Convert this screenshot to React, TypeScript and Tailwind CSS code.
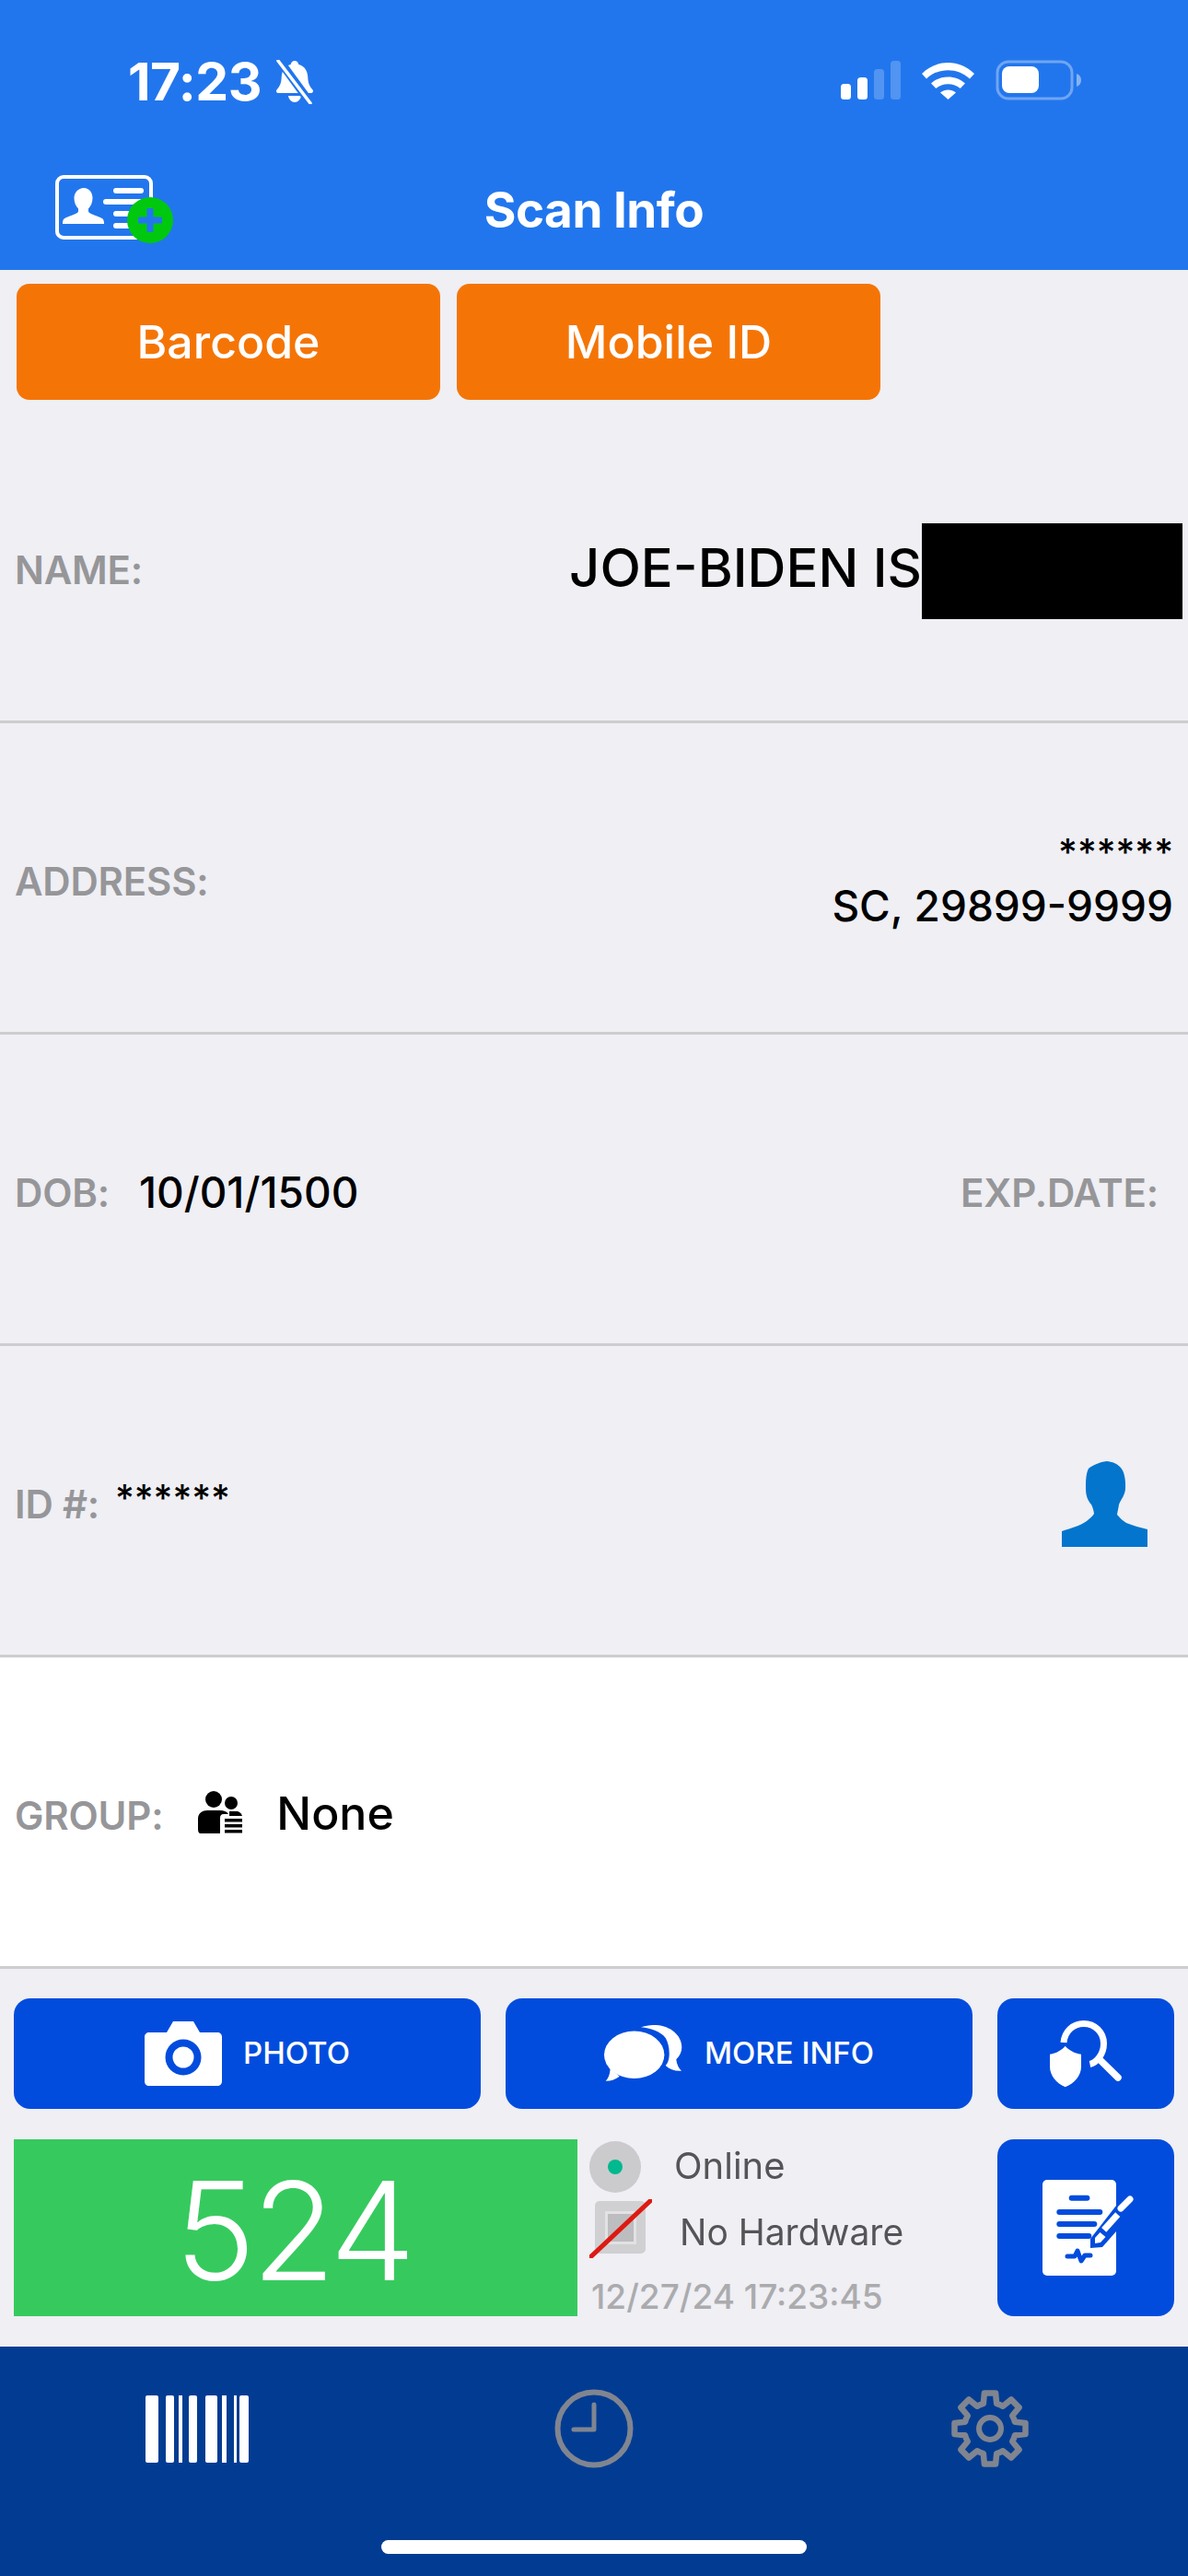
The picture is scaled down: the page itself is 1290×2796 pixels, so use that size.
const font = "font-['Inter','Liberation_Sans',sans-serif]";

function BellSlash() {
  return (
    <svg width="46" height="48" viewBox="0 0 46 48" className="ml-[13px] shrink-0">
      <path d="M23 1c2.500 0 4 1.800 4.300 4 6.500 1.600 9.700 7 10 14 .2 5 1.200 9 5.200 13.500 1.200 1.600.2 3.500-2 3.500H5.500c-2.200 0-3.200-1.900-2-3.500C7.500 28 8.500 24 8.700 19c.3-7 3.500-12.400 10-14C19 2.800 20.500 1 23 1z" fill="#fff" />
      <path d="M16 39h14c-.7 4-3.500 7-7 7s-6.300-3-7-7z" fill="#fff" />
      <path d="M6 0l35 48" stroke="#2276ed" strokeWidth="9" />
      <path d="M5 1l35 46" stroke="#fff" strokeWidth="3.500" strokeLinecap="round" />
    </svg>
  );
}

function StatusIcons() {
  return (
    <svg width="262" height="44" viewBox="0 0 262 44">
      <rect x="0" y="26" width="11" height="17" rx="3.500" fill="#fff" />
      <rect x="18" y="19" width="11" height="24" rx="3.500" fill="#fff" />
      <rect x="36" y="10" width="11" height="33" rx="3.500" fill="#fff" fillOpacity="0.22" />
      <rect x="54" y="1" width="11" height="42" rx="3.500" fill="#fff" fillOpacity="0.22" />
      <path d="M88 15C104-1 129-1 145 15l-5 5.500c-13-12.500-34-12.500-47 0z" fill="#fff" />
      <path d="M98 25.500c10-9.500 27-9.500 37 0l-5.300 5.500c-7-6.500-19.400-6.500-26.400 0z" fill="#fff" />
      <path d="M108 35.500c5-4 12-4 17 0L116.500 43z" fill="#fff" />
      <rect x="170" y="2" width="81" height="40" rx="12" fill="none" stroke="#fff" strokeOpacity="0.35" strokeWidth="3" />
      <rect x="175" y="7" width="40" height="29" rx="8" fill="#fff" />
      <path d="M256 15c3 .8 5 3.500 5 7s-2 6.200-5 7z" fill="#fff" fillOpacity="0.45" />
    </svg>
  );
}

function CardAddIcon() {
  return (
    <div className="relative w-[106px] h-[70px]">
      <svg width="106" height="70" viewBox="0 0 106 70">
        <rect x="2" y="2" width="102" height="66" rx="7" fill="none" stroke="#fff" strokeWidth="4" />
        <path d="M31 14c6 0 9.500 5 9.500 11 0 5-2 9-4.500 11.500v3c0 3 12 5 15.500 8 1.500 1.500 1.500 4 1.500 5.500H8c0-1.500 0-4 1.500-5.500 3.500-3 15.500-5 15.500-8v-3c-2.500-2.500-4.500-6.500-4.500-11.500C20.500 19 25 14 31 14z" fill="#fff" />
        <rect x="63" y="14" width="33" height="6" rx="3" fill="#fff" />
        <rect x="52" y="26" width="44" height="6" rx="3" fill="#fff" />
        <rect x="63" y="39" width="30" height="6" rx="3" fill="#fff" />
        <rect x="63" y="52" width="30" height="6" rx="3" fill="#fff" />
      </svg>
      <div className="absolute left-[78px] top-[24px] w-[50px] h-[50px] rounded-full bg-[#00c80f] flex items-center justify-center">
        <svg width="26" height="26" viewBox="0 0 26 26">
          <path d="M13 2v22M2 13h22" stroke="#2276ed" strokeWidth="7" strokeLinecap="round" />
        </svg>
      </div>
    </div>
  );
}

function PersonIcon() {
  return (
    <svg width="93" height="93" viewBox="0 0 93 93">
      <path d="M48.700 0c5 .5 13 2 17.300 10 2.500 5 3.500 13 3 20-.5 7-4.500 11-7 17-.5 4-1.500 7-2 11 3 3.500 6 6.500 10 9 7 3 16 5 23 7v19H0V76c9-3 20-6 27-11 3-2.500 6-5 8-8-.5-4-1.500-7-3-10-3.500-4-6-9-6-17 0-8 0-16 3-22 5-4 12-7 19.700-8z" fill="#0375cd" />
    </svg>
  );
}

function GroupIcon() {
  return (
    <svg width="48" height="48" viewBox="0 0 48 48">
      <circle cx="17" cy="9" r="9" fill="#000" />
      <circle cx="36" cy="13" r="7" fill="#000" />
      <path d="M2 46c-2-1-2-3-2-6V30c0-6 5-9 10-9h14c4 0 7 1 9 4h-5c-3 0-4 2-4 4v17z" fill="#000" />
      <path d="M34 22h7c4 0 6 2 7 5H34z" fill="#000" />
      <rect x="29" y="30" width="19" height="3.500" fill="#000" />
      <rect x="29" y="36" width="19" height="3.500" fill="#000" />
      <rect x="29" y="42" width="19" height="3.500" fill="#000" />
    </svg>
  );
}

function CameraIcon() {
  return (
    <svg width="84" height="70" viewBox="0 0 84 70">
      <path d="M5 12h19l7-12h22l7 12h19c3 0 5 2 5 5v48c0 3-2 5-5 5H5c-3 0-5-2-5-5V17c0-3 2-5 5-5z" fill="#fff" />
      <circle cx="42" cy="39" r="19.500" fill="#024cdd" />
      <circle cx="42" cy="39" r="11.500" fill="#fff" />
    </svg>
  );
}

function ChatIcon() {
  return (
    <svg width="85" height="62" viewBox="0 0 85 62">
      <path d="M40 2.300C45 .5 51 0 56.700 0 72 1 84.300 11 84.300 24c0 5-2 9.500-6 13.300.5 5 2.500 9.500 5.700 12.400-7 .5-13-1.700-17.300-5.700 3.500-4 4-9 4-13.300 0-7-1.500-12-4-16.700C61 6.500 50 3.500 40 2.300z" fill="#fff" />
      <ellipse cx="32.700" cy="32.300" rx="32.700" ry="25.700" fill="#fff" />
      <path d="M1.700 60.700c3-3 4.500-7 5-14l10 9c-4 3-9 5-15 5z" fill="#fff" />
    </svg>
  );
}

function ShieldSearchIcon() {
  return (
    <svg width="78" height="73" viewBox="0 0 78 73">
      <path d="M15 24C16 12 25 3.500 36.700 3.500 49 3.500 58.500 13 58.500 25c0 12-8 21-15 22.500" fill="none" stroke="#fff" strokeWidth="7" />
      <path d="M54 42.300L74 62" stroke="#fff" strokeWidth="7.500" strokeLinecap="round" />
      <path d="M16.700 27.700c4 4.500 10 8 17.300 9V50c0 10-7 18-17.300 22.300C7 68 0 60 0 50V36.700c7-1 12.700-4.500 16.700-9z" fill="#fff" />
    </svg>
  );
}

function NoteIcon() {
  return (
    <svg width="100" height="104" viewBox="0 0 100 104">
      <rect x="0" y="0" width="80" height="104" rx="5" fill="#fff" />
      <rect x="28.700" y="16.700" width="22.700" height="6" rx="3" fill="#024cdd" />
      <rect x="15.300" y="32" width="50" height="6" rx="3" fill="#024cdd" />
      <rect x="15.300" y="45" width="44" height="6" rx="3" fill="#024cdd" />
      <rect x="15.300" y="58" width="38" height="6" rx="3" fill="#024cdd" />
      <path d="M27 83h8l3-6 4 11 4-6h6" fill="none" stroke="#024cdd" strokeWidth="5" strokeLinecap="round" strokeLinejoin="round" />
      <path d="M52 64v10l13-1 15-17V28z" fill="#024cdd" />
      <path d="M57 63l5.500-6 6 5-5.500 6-6 1z" fill="#fff" />
      <path d="M66.700 54.300L81.700 37.700" stroke="#fff" strokeWidth="7" />
      <path d="M85 31L95 21" stroke="#fff" strokeWidth="7" strokeLinecap="round" />
    </svg>
  );
}

function ChipIcon() {
  return (
    <div className="relative w-[68px] h-[64px] shrink-0">
      <div className="absolute left-[6px] top-[2px] w-[55px] h-[57px] rounded-[5px] bg-[#d0d0d2] flex items-center justify-center">
        <div className="w-[34px] h-[36px] bg-[#bdbdbf] border-[3px] border-[#e2e2e4]" />
      </div>
      <svg width="68" height="64" viewBox="0 0 68 64" className="absolute left-0 top-0">
        <path d="M0 64L68 0" stroke="#dd1a12" strokeWidth="5" />
      </svg>
    </div>
  );
}

function BarcodeIcon() {
  return (
    <div className="flex items-stretch h-[73px] w-[113px] justify-between">
      <div className="w-[14px] bg-white rounded-[2px]" />
      <div className="w-[9px] bg-white rounded-[2px] ml-[8px]" />
      <div className="w-[4px] bg-white ml-[5px]" />
      <div className="w-[9px] bg-white rounded-[2px] ml-[6px]" />
      <div className="w-[13px] bg-white rounded-[2px] ml-[9px]" />
      <div className="w-[5px] bg-white ml-[4px]" />
      <div className="w-[3px] bg-white ml-[8px]" />
      <div className="w-[10px] bg-white rounded-[2px] ml-[3px]" />
    </div>
  );
}

function ClockIcon() {
  return (
    <svg width="86" height="86" viewBox="0 0 86 86">
      <circle cx="43" cy="43" r="39.500" fill="none" stroke="#808590" strokeWidth="6" />
      <path d="M43 17v27H21" fill="none" stroke="#808590" strokeWidth="5" strokeLinecap="round" strokeLinejoin="round" />
    </svg>
  );
}

// eight teeth, worked out from the centre of the wheel
function gearPath() {
  const pt = (r: number, deg: number) => {
    const a = ((deg - 90) * Math.PI) / 180;
    return `${(43 + r * Math.cos(a)).toFixed(1)} ${(43 + r * Math.sin(a)).toFixed(1)}`;
  };
  let d = "";
  for (let i = 0; i < 8; i++) {
    const c = i * 45;
    d += `${i === 0 ? "M" : "L"}${pt(28, c - 22.5)} L${pt(28, c - 15)} L${pt(39, c - 9)} L${pt(39, c + 9)} L${pt(28, c + 15)} `;
  }
  return d + "Z";
}

function GearIcon() {
  return (
    <svg width="86" height="86" viewBox="0 0 86 86" fill="none" stroke="#808590">
      <path d={gearPath()} strokeWidth="6.500" strokeLinejoin="round" />
      <circle cx="43" cy="43" r="12" strokeWidth="6" />
    </svg>
  );
}

const label = "text-[42px] font-semibold text-[#969699] tracking-[-0.2px]";
const value = "font-medium text-black";
const row = "h-[338px] shrink-0 flex items-center pt-[7px] pl-[16px] border-b-[3px] border-[#cdcdcf]";

export default function App() {
  return (
    <div className={`${font} w-[1290px] h-[2796px] bg-[#efeff4] flex flex-col overflow-hidden`}>
      {/* Header */}
      <header className="bg-[#2276ed] h-[293px] shrink-0 text-white">
        <div className="h-[190px] flex justify-between pt-[65px] pl-[139px] pr-[115px]">
          <div className="flex items-start h-[48px]">
            <span className="text-[57px] leading-[48px] font-bold tracking-[-0.5px]">17:23</span>
            <BellSlash />
          </div>
          <StatusIcons />
        </div>
        <div className="relative flex justify-center">
          <div className="absolute left-[60px] top-0">
            <CardAddIcon />
          </div>
          <span className="text-[53px] leading-[76px] font-bold tracking-[-0.5px]">Scan Info</span>
        </div>
      </header>

      {/* Scan type */}
      <div className="h-[154px] shrink-0 flex gap-[18px] pl-[18px] pt-[15px]">
        {["Barcode", "Mobile ID"].map((text) => (
          <button
            key={text}
            className="w-[460px] h-[126px] rounded-[14px] bg-[#f47506] text-white text-[50px] font-medium"
          >
            {text}
          </button>
        ))}
      </div>

      {/* Fields */}
      <div className={`${row} justify-between pr-[6px]`}>
        <span className={label}>NAME:</span>
        <div className="flex items-center">
          <span className="text-[58px] font-medium text-black -mt-[4px]">JOE-BIDEN IS</span>
          <div className="w-[283px] h-[104px] bg-black mt-[4px]" />
        </div>
      </div>

      <div className={`${row} justify-between pr-[16px]`}>
        <span className={label}>ADDRESS:</span>
        <div className={`flex flex-col items-end leading-[59px] -mt-[4px] ${value}`}>
          <span className="text-[40px]">******</span>
          <span className="text-[46px]">SC, 29899-9999</span>
        </div>
      </div>

      <div className={`${row} justify-between pr-[32px]`}>
        <div className="flex items-center gap-[32px]">
          <span className={label}>DOB:</span>
          <span className={`${value} text-[46px]`}>10/01/1500</span>
        </div>
        <span className={label}>EXP.DATE:</span>
      </div>

      <div className={`${row} justify-between pr-[44px]`}>
        <div className="flex items-start gap-[17px]">
          <span className={label}>ID #:</span>
          <span className={`${value} text-[40px] leading-[50px]`}>******</span>
        </div>
        <PersonIcon />
      </div>

      <div className={`${row} bg-white`}>
        <span className={label}>GROUP:</span>
        <div className="ml-[38px] -mt-[4px]">
          <GroupIcon />
        </div>
        <span className="ml-[37px] -mt-[3px] text-[50px] font-medium text-black">None</span>
      </div>

      {/* Actions */}
      <div className="flex-1 px-[15px] pt-[32px] flex flex-col gap-[33px]">
        <div className="flex gap-[27px] h-[120px]">
          <button className="w-[507px] rounded-[18px] bg-[#024cdd] flex items-center justify-center gap-[23px] text-white text-[33px] font-medium">
            <CameraIcon />
            <span>PHOTO</span>
          </button>
          <button className="w-[507px] rounded-[18px] bg-[#024cdd] flex items-center justify-center gap-[24px] text-white text-[33px] font-medium">
            <ChatIcon />
            <span>MORE INFO</span>
          </button>
          <button className="w-[192px] rounded-[18px] bg-[#024cdd] flex items-center justify-center">
            <ShieldSearchIcon />
          </button>
        </div>
        <div className="flex h-[192px]">
          <div className="w-[612px] bg-[#36ca5e] flex items-center justify-center pt-[8px] pr-[5px] text-white text-[148px] font-light tracking-[-4px]">
            524
          </div>
          <div className="flex-1 pl-[13px] flex flex-col">
            <div className="flex items-center h-[64px] -mt-[2px]">
              <div className="w-[56px] h-[56px] rounded-full bg-[#cbcbce] flex items-center justify-center">
                <div className="w-[16px] h-[16px] rounded-full bg-[#00b98e]" />
              </div>
              <span className="ml-[36px] -mt-[2px] text-[40px] text-[#555558] blur-[0.6px]">Online</span>
            </div>
            <div className="flex items-center h-[72px] -mt-[1px]">
              <ChipIcon />
              <span className="ml-[30px] mt-[8px] text-[39px] text-[#555558] blur-[0.6px]">No Hardware</span>
            </div>
            <span className="mt-[18px] ml-[2px] text-[37px] leading-[40px] font-medium text-[#ababae]">12/27/24 17:23:45</span>
          </div>
          <button className="w-[192px] rounded-[18px] bg-[#024cdd] flex items-center justify-center pl-[6px]">
            <NoteIcon />
          </button>
        </div>
      </div>

      {/* Tab bar */}
      <nav className="h-[249px] shrink-0 bg-[#023c92] relative">
        <div className="flex items-center h-[86px] mt-[46px]">
          <div className="w-[430px] flex justify-center pr-[2px]">
            <BarcodeIcon />
          </div>
          <div className="w-[430px] flex justify-center">
            <ClockIcon />
          </div>
          <div className="w-[430px] flex justify-center">
            <GearIcon />
          </div>
        </div>
        <div className="absolute left-[414px] top-[210px] w-[462px] h-[15px] rounded-full bg-white" />
      </nav>
    </div>
  );
}
